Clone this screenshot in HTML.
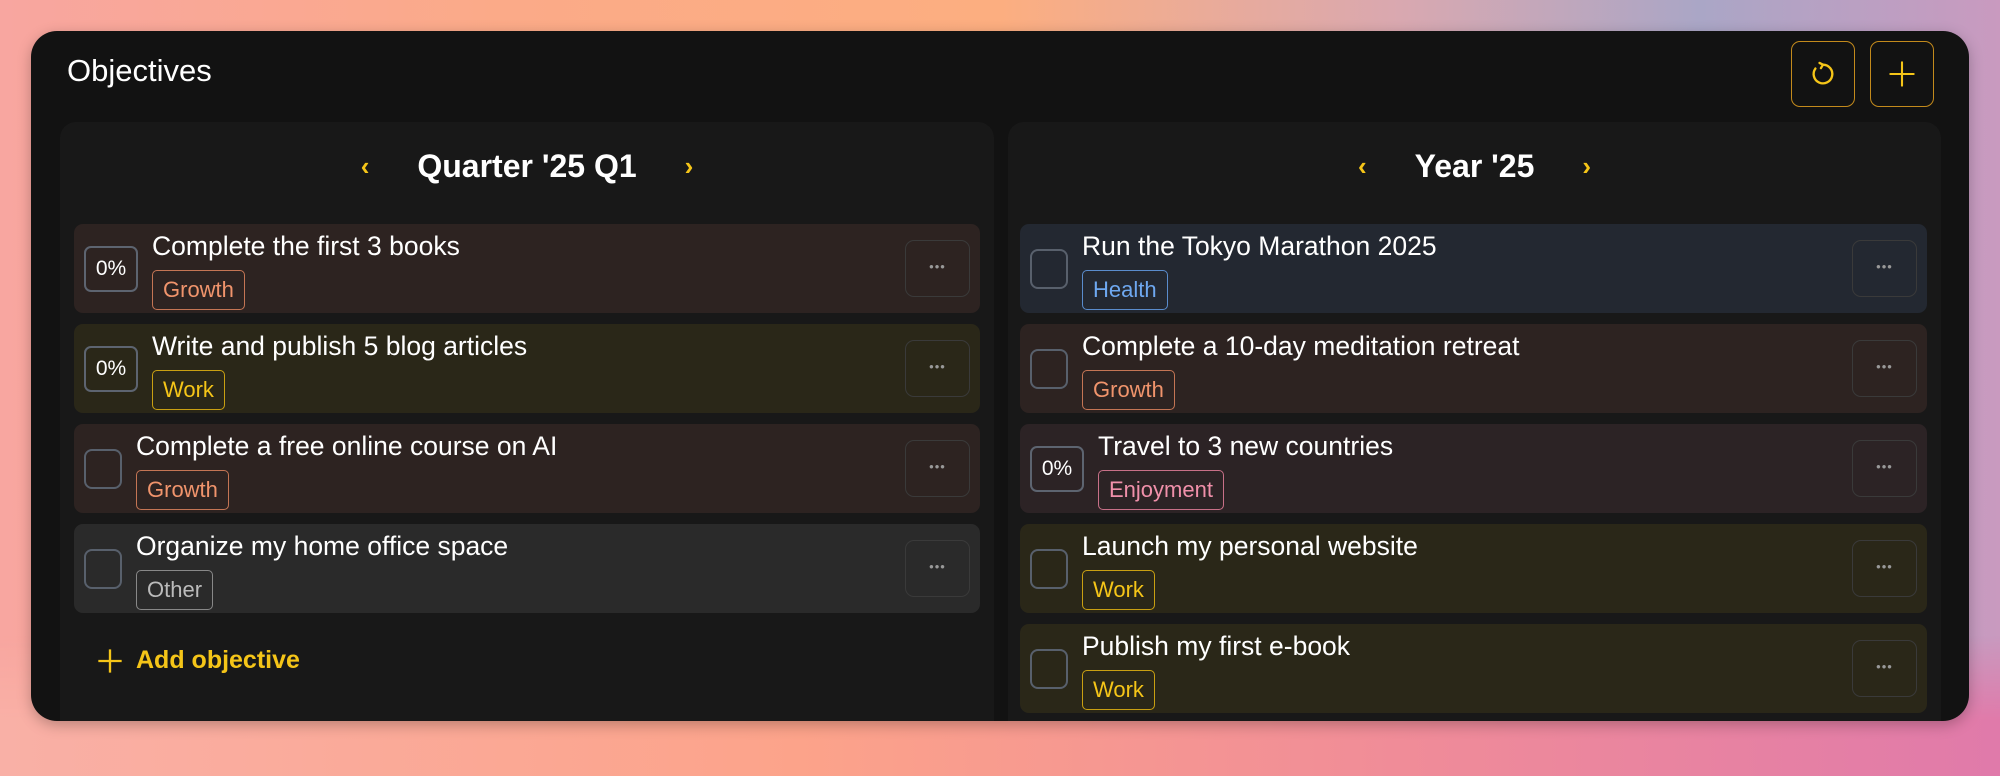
<!DOCTYPE html>
<html><head><meta charset="utf-8"><style>
*{box-sizing:border-box;margin:0;padding:0}
body{width:2000px;height:776px;overflow:hidden;font-family:"Liberation Sans",sans-serif;
background:linear-gradient(90deg,#f8a6a0 0%,#fbaa88 25%,#fcae80 50%,#d9a8b0 70%,#aaa6c6 85%,#c99abf 100%);position:relative}
.bot{position:absolute;left:0;right:0;bottom:0;height:140px;background:linear-gradient(90deg,#f9b0a6 0%,#fca38a 40%,#f08c98 70%,#e07aaa 100%);-webkit-mask-image:linear-gradient(180deg,transparent,#000 60%);mask-image:linear-gradient(180deg,transparent,#000 60%)}
.card{position:absolute;left:31px;top:31px;width:1938px;height:690px;background:#121212;border-radius:26px;overflow:hidden;box-shadow:0 4px 14px rgba(0,0,0,.25)}
h1{position:absolute;left:36px;top:22px;font-size:31px;font-weight:normal;color:#fff}
.btn{position:absolute;top:10px;width:64px;height:66px;border:1.5px solid #c38a1c;border-radius:9px;display:flex;align-items:center;justify-content:center}
.panel{position:absolute;top:91px;height:620px;background:#181818;border-radius:16px}
.hdr{position:absolute;top:0;left:0;right:0;height:88px;display:flex;align-items:center;justify-content:center;color:#fff;font-weight:bold;font-size:32px}
.chev{color:#f5c518;font-size:26px;font-weight:bold}
.row{position:absolute;height:89px;border-radius:9px}
.cb{position:absolute;left:10px;top:25px;width:38px;height:40px;border:2.5px solid #58606c;border-radius:8px}
.pct{position:absolute;left:10px;top:22px;width:54px;height:46px;border:2.5px solid #5d6470;border-radius:7px;color:#fff;font-size:21px;display:flex;align-items:center;justify-content:center}
.t{position:absolute;top:7px;color:#fff;font-size:26.5px;white-space:nowrap}
.tag{position:absolute;top:46px;height:40px;padding:0 10px;border:1.5px solid;border-radius:5px;font-size:22px;line-height:37px}
.dots{position:absolute;right:10px;top:16px;width:65px;height:57px;border:1.5px solid #3a3a3a;border-radius:9px;color:#999;font-size:13px;text-align:center;line-height:52px;letter-spacing:1px}
.g{background:#2d2321}.g .tag{color:#f0946c;border-color:#c47554}
.w{background:#2a2718}.w .tag{color:#f5c518;border-color:#c9a012}
.o{background:#2a2a2a}.o .tag{color:#bbb;border-color:#888}
.h{background:#232831}.h .tag{color:#6ea8f0;border-color:#5a8ccc}
.e{background:#2c2325}.e .tag{color:#f090aa;border-color:#c87088}
.add{position:absolute;left:36px;top:524px;color:#f5c518;font-weight:bold;font-size:25px;display:flex;align-items:center;gap:12px}
</style></head><body><div class="bot"></div>
<div class="card">
<h1>Objectives</h1>
<div class="btn" style="left:1760px"><svg width="28" height="28" viewBox="0 0 24 24" fill="none" stroke="#f5c518" stroke-width="2" stroke-linecap="round" stroke-linejoin="round"><path d="M12 4A8 8 0 1 1 5.5 7.3"/><path d="M9 2.5L12 4l-1.8 3"/></svg></div>
<div class="btn" style="left:1839px"><svg width="28" height="28" viewBox="0 0 24 24" fill="none" stroke="#f5c518" stroke-width="1.8" stroke-linecap="round"><path d="M12 2v20M2 12h20"/></svg></div>

<div class="panel" style="left:29px;width:934px">
<div class="hdr"><span class="chev">‹</span><span style="margin:0 48px">Quarter '25 Q1</span><span class="chev">›</span></div>
<div class="row g" style="left:14px;top:102px;width:906px"><div class="pct">0%</div><div class="t" style="left:78px">Complete the first 3 books</div><div class="tag" style="left:78px">Growth</div><div class="dots">•••</div></div>
<div class="row w" style="left:14px;top:202px;width:906px"><div class="pct">0%</div><div class="t" style="left:78px">Write and publish 5 blog articles</div><div class="tag" style="left:78px">Work</div><div class="dots">•••</div></div>
<div class="row g" style="left:14px;top:302px;width:906px"><div class="cb"></div><div class="t" style="left:62px">Complete a free online course on AI</div><div class="tag" style="left:62px">Growth</div><div class="dots">•••</div></div>
<div class="row o" style="left:14px;top:402px;width:906px"><div class="cb"></div><div class="t" style="left:62px">Organize my home office space</div><div class="tag" style="left:62px">Other</div><div class="dots">•••</div></div>
<div class="add"><svg width="28" height="28" viewBox="0 0 24 24" fill="none" stroke="#f5c518" stroke-width="2"><path d="M12 2v20M2 12h20"/></svg>Add objective</div>
</div>

<div class="panel" style="left:977px;width:933px">
<div class="hdr"><span class="chev">‹</span><span style="margin:0 48px">Year '25</span><span class="chev">›</span></div>
<div class="row h" style="left:12px;top:102px;width:907px"><div class="cb"></div><div class="t" style="left:62px">Run the Tokyo Marathon 2025</div><div class="tag" style="left:62px">Health</div><div class="dots">•••</div></div>
<div class="row g" style="left:12px;top:202px;width:907px"><div class="cb"></div><div class="t" style="left:62px">Complete a 10-day meditation retreat</div><div class="tag" style="left:62px">Growth</div><div class="dots">•••</div></div>
<div class="row e" style="left:12px;top:302px;width:907px"><div class="pct">0%</div><div class="t" style="left:78px">Travel to 3 new countries</div><div class="tag" style="left:78px">Enjoyment</div><div class="dots">•••</div></div>
<div class="row w" style="left:12px;top:402px;width:907px"><div class="cb"></div><div class="t" style="left:62px">Launch my personal website</div><div class="tag" style="left:62px">Work</div><div class="dots">•••</div></div>
<div class="row w" style="left:12px;top:502px;width:907px"><div class="cb"></div><div class="t" style="left:62px">Publish my first e-book</div><div class="tag" style="left:62px">Work</div><div class="dots">•••</div></div>
</div>
</div>
</body></html>
